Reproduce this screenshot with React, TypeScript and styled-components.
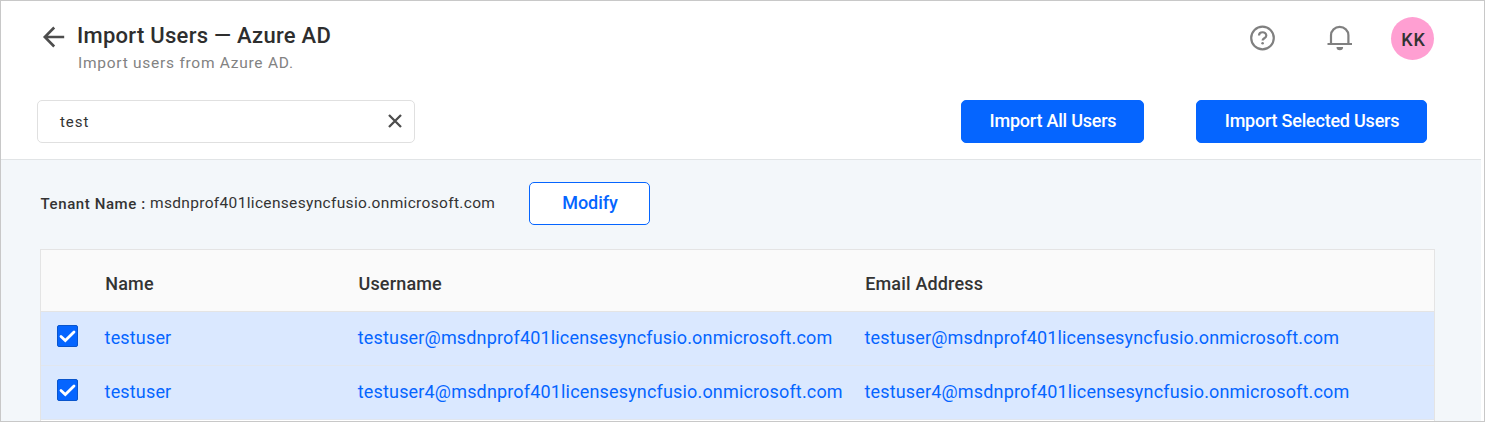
import React from 'react';
import styled, { createGlobalStyle } from 'styled-components';

const Global = createGlobalStyle`
  * { box-sizing: border-box; }
  body { margin: 0; font-family: Roboto, "Liberation Sans", sans-serif; color: #333; background: #fff; }
  button { font-family: inherit; cursor: pointer; }
`;

const Frame = styled.div`
  width: 1485px;
  height: 422px;
  border: 1px solid #c8c8c8;
  padding-right: 3px;
  overflow: hidden;
  display: flex;
  flex-direction: column;
`;

const Header = styled.header`
  height: 159px;
  flex: none;
  border-bottom: 1px solid #e1e4e6;
`;

const TitleBar = styled.div`
  display: flex;
  align-items: flex-start;
  height: 99px;
  padding: 16px 47px 0 41px;
`;

const BackIcon = styled.svg`
  margin-top: 8px;
  width: 24px;
  height: 24px;
`;

const Titles = styled.div`
  flex: 1;
  padding: 5px 0 0 11px;
`;

const Title = styled.h1`
  margin: 0;
  font-size: 22px;
  line-height: 28px;
  font-weight: 500;
  letter-spacing: 0.28px;
  color: #2e2e2e;
`;

const Subtitle = styled.p`
  margin: 3px 0 0 1px;
  font-size: 15.5px;
  line-height: 20px;
  letter-spacing: 0.74px;
  color: #828282;
`;

const Tools = styled.div`
  display: flex;
  align-items: center;
  height: 43px;
`;

const HelpIcon = styled.svg`
  width: 26px;
  height: 26px;
  margin: 0 51px 1px 0;
`;

const BellIcon = styled.svg`
  width: 26px;
  height: 26px;
  margin: 0 38px 1px 0;
`;

const Avatar = styled.div`
  width: 43px;
  height: 43px;
  border-radius: 50%;
  background: #ff9fd2;
  display: flex;
  align-items: center;
  justify-content: center;
  font-size: 18px;
  font-weight: 500;
  letter-spacing: 0.8px;
  padding: 2px 0 0 2px;
`;

const ActionBar = styled.div`
  display: flex;
  height: 43px;
  padding: 0 54px 0 36px;
`;

const SearchBox = styled.div`
  width: 378px;
  border: 1px solid #e0e0e0;
  border-radius: 5px;
  display: flex;
  align-items: center;
  justify-content: space-between;
  padding: 0 12px 0 22px;
  margin-right: auto;
`;

const SearchText = styled.span`
  font-size: 15px;
  letter-spacing: 0.95px;
`;

const ClearIcon = styled.svg`
  width: 14px;
  height: 14px;
  margin-bottom: 1px;
`;

const Button = styled.button<{ $width: number; $outline?: boolean }>`
  width: ${p => p.$width}px;
  height: 43px;
  padding: 0 0 2px 1px;
  border: 1px solid #0565ff;
  border-radius: 5px;
  background: ${p => (p.$outline ? '#fff' : '#0565ff')};
  color: ${p => (p.$outline ? '#0565ff' : '#fff')};
  font-size: 18px;
  font-weight: 500;
  letter-spacing: ${p => (p.$outline ? '-0.1px' : '-0.22px')};
`;

const Actions = styled.div`
  display: flex;
  gap: 52px;
`;

const Body = styled.main`
  flex: 1;
  background: #f3f7fa;
  padding: 22px 46px 0 39px;
  min-height: 0;
`;

const TenantRow = styled.div`
  display: flex;
  align-items: center;
  height: 43px;
  margin-bottom: 24px;
`;

const TenantLabel = styled.span`
  width: 110px;
  padding-left: 0.5px;
  font-size: 15px;
  font-weight: 500;
  letter-spacing: 0.6px;
  white-space: nowrap;
`;

const TenantName = styled.span`
  width: 379px;
  padding-bottom: 1px;
  font-size: 15.5px;
  letter-spacing: 0.33px;
`;

const Table = styled.table`
  width: 1395px;
  table-layout: fixed;
  border-collapse: separate;
  border-spacing: 0;
  border: 1px solid #e4e4e4;
  background: #fff;
  height: 240px;
`;

const Th = styled.th`
  height: 62px;
  padding: 6px 0 0 0.7px;
  border-bottom: 1px solid #e4e4e4;
  background: #fafafa;
  text-align: left;
  font-size: 18px;
  font-weight: 500;
  letter-spacing: 0.17px;
`;

const Td = styled.td`
  height: 54px;
  padding: 0 0 2px;
  border-bottom: 1px solid #e1e6ee;
  background: #dae8ff;
  color: #0565ff;
  font-size: 18px;
  letter-spacing: 0.165px;
  white-space: nowrap;
`;

const Check = styled.svg`
  display: block;
  width: 21px;
  height: 22px;
  margin: 0 0 3px 16px;
`;

const users = [
  { name: 'testuser', email: 'testuser@msdnprof401licensesyncfusio.onmicrosoft.com' },
  { name: 'testuser', email: 'testuser4@msdnprof401licensesyncfusio.onmicrosoft.com' },
];

export default function App() {
  return (
    <Frame>
      <Global />
      <Header>
        <TitleBar>
          <BackIcon viewBox="0 0 24 24" fill="none" stroke="#4d4d4d" strokeWidth="2.6">
            <path d="M12.2 2.5 2.8 12l9.400 9.500M2.500 12H22.200" />
          </BackIcon>
          <Titles>
            <Title>Import Users — Azure AD</Title>
            <Subtitle>Import users from Azure AD.</Subtitle>
          </Titles>
          <Tools>
            <HelpIcon viewBox="0 0 26 26" fill="none" stroke="#808080" strokeWidth="2.2">
              <circle cx="12.5" cy="13" r="11.3" />
              <path d="M9 10.500c0-4.300 7.300-4.300 7.300-.1 0 2.800-3.700 2.800-3.700 5.200" />
              <circle cx="12.6" cy="18.300" r="1.300" fill="#808080" stroke="none" />
            </HelpIcon>
            <BellIcon viewBox="0 0 26 26" fill="none" stroke="#808080" strokeWidth="2.2">
              <path d="M0.500 19H25M4 18.500V10.300a8.700 8.400 0 0 1 17.400 0V18.500" />
              <path d="M9.500 22h6.600a3.300 3.300 0 0 1-6.600 0z" fill="#808080" stroke="none" />
            </BellIcon>
            <Avatar>KK</Avatar>
          </Tools>
        </TitleBar>
        <ActionBar>
          <SearchBox>
            <SearchText>test</SearchText>
            <ClearIcon viewBox="0 0 14 14" fill="none" stroke="#4d4d4d" strokeWidth="2.3">
              <path d="M1 1l12 12M13 1L1 13" />
            </ClearIcon>
          </SearchBox>
          <Actions>
            <Button $width={183}>Import All Users</Button>
            <Button $width={231}>Import Selected Users</Button>
          </Actions>
        </ActionBar>
      </Header>
      <Body>
        <TenantRow>
          <TenantLabel>Tenant Name :</TenantLabel>
          <TenantName>msdnprof401licensesyncfusio.onmicrosoft.com</TenantName>
          <Button $width={121} $outline>Modify</Button>
        </TenantRow>
        <Table>
          <colgroup>
            <col style={{ width: 63.6 }} />
            <col style={{ width: 253.2 }} />
            <col style={{ width: 506.7 }} />
            <col />
          </colgroup>
          <thead>
            <tr><Th /><Th>Name</Th><Th>Username</Th><Th>Email Address</Th></tr>
          </thead>
          <tbody>
            {users.map(u => (
              <tr key={u.email}>
                <Td>
                  <Check viewBox="0 0 21 22">
                    <rect x="0.5" y="0.5" width="20" height="21" rx="1.500" fill="#0565ff" stroke="#0a55cc" />
                    <path d="M4 11.500l4.300 4L17 7" fill="none" stroke="#fff" strokeWidth="2.800" strokeLinecap="round" />
                  </Check>
                </Td>
                <Td>{u.name}</Td>
                <Td>{u.email}</Td>
                <Td>{u.email}</Td>
              </tr>
            ))}
            <tr><td /></tr>
          </tbody>
        </Table>
      </Body>
    </Frame>
  );
}
